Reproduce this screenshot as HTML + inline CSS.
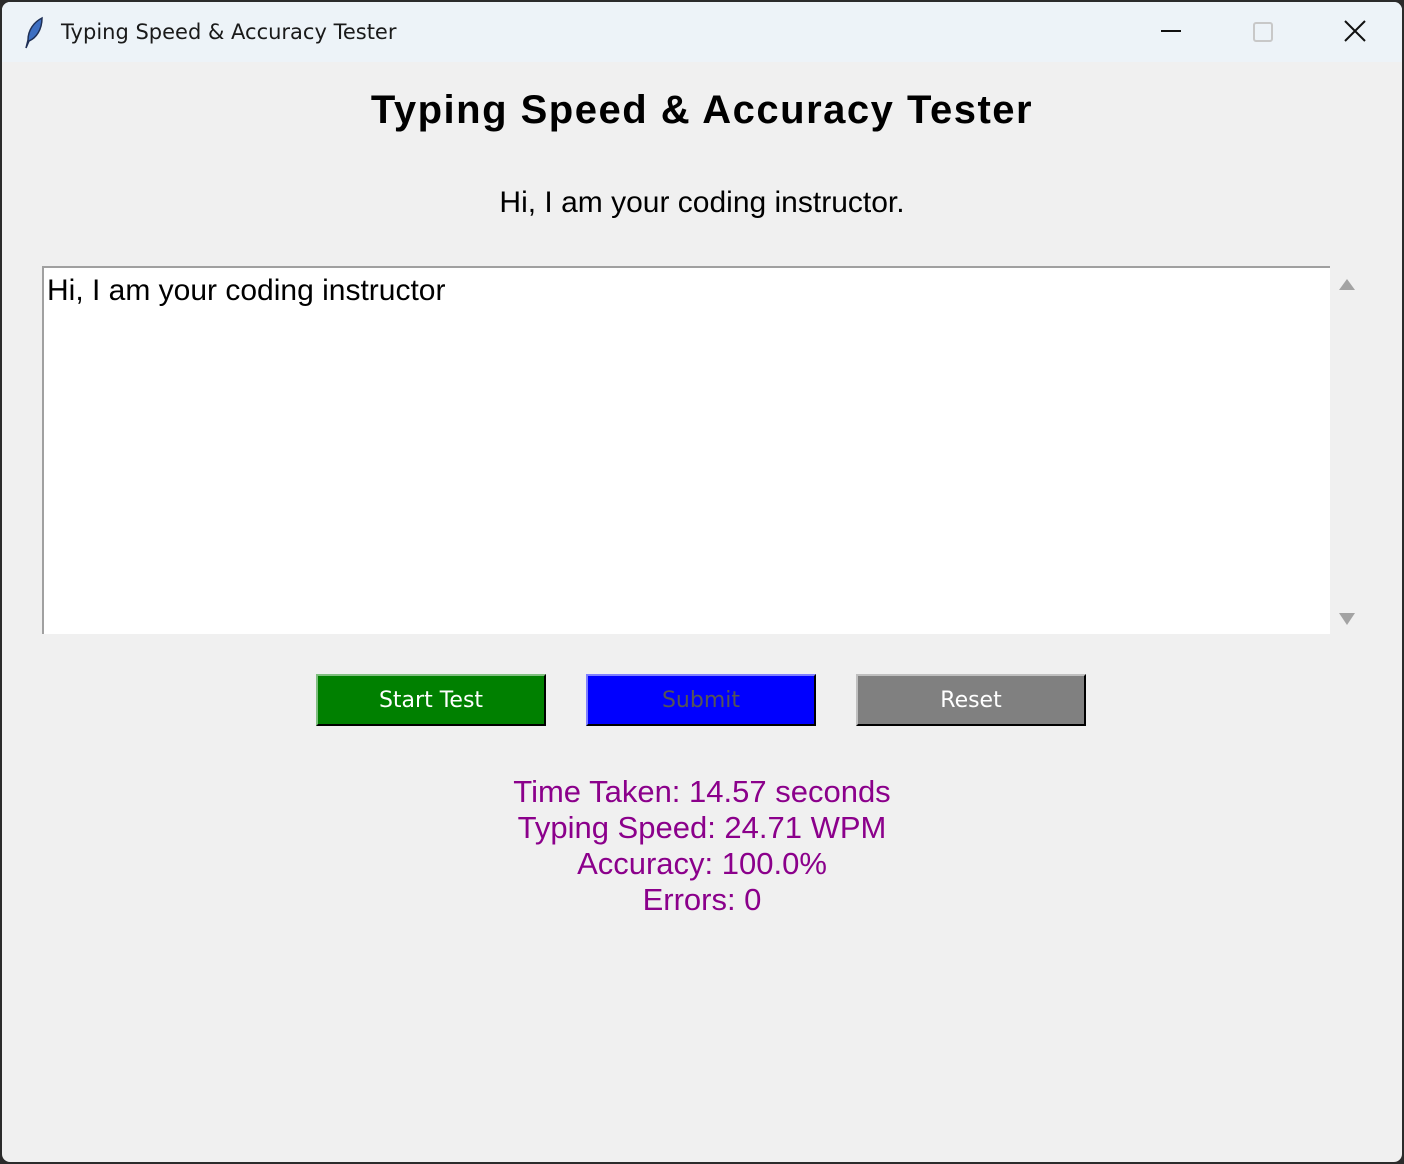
<!DOCTYPE html>
<html><head><meta charset="utf-8"><style>
*{margin:0;padding:0;box-sizing:border-box}
body{width:1404px;height:1164px;background:#2b2b2b;position:relative;overflow:hidden;font-family:"Liberation Sans",Arial,sans-serif}
.win{position:absolute;left:2px;top:2px;width:1400px;height:1160px;background:#f0f0f0;border-radius:8px;overflow:hidden}
.tb{position:absolute;left:0;top:0;width:1400px;height:60px;background:#edf3f8}
.tt{position:absolute;left:59px;top:18px;color:#1a1a1a;font-family:"DejaVu Sans","Liberation Sans",sans-serif;font-size:21px}
.abs{position:absolute}
h1{position:absolute;left:0;width:1400px;top:86px;text-align:center;font-size:40px;letter-spacing:1.5px;font-weight:bold;color:#000}
.sub{position:absolute;left:0;width:1400px;top:184px;text-align:center;font-size:30px;color:#000}
.ta{position:absolute;left:40px;top:264px;width:1288px;height:368px;background:#fff;border-top:2px solid #a0a0a0;border-left:2px solid #a0a0a0}
.ta span{position:absolute;left:3px;top:6px;font-size:30px;color:#000}
.btn{position:absolute;top:672px;width:230px;height:52px;font-size:22px;text-align:center;line-height:50px;border:2px solid;font-family:"DejaVu Sans",sans-serif}
.res{position:absolute;left:0;width:1400px;top:772px;text-align:center;font-size:31px;line-height:36px;color:#8b008b}
</style></head><body>
<div class="win">
<div class="tb">
<svg class="abs" style="left:22px;top:14px" width="22" height="34" viewBox="0 0 22 34"><path d="M18 2 C10 6 4 14 4 24 L2 32 L5 25 C12 22 18 14 18 2Z" fill="#3d6fc2" stroke="#1e2f55" stroke-width="1.5"/></svg>
<div class="tt">Typing Speed &amp; Accuracy Tester</div>
<div class="abs" style="left:1159px;top:28px;width:20px;height:2px;background:#111"></div>
<div class="abs" style="left:1251px;top:20px;width:20px;height:20px;border:2px solid #c8c8c8;border-radius:3px"></div>
<svg class="abs" style="left:1342px;top:18px" width="22" height="22"><path d="M1 1L21 21M21 1L1 21" stroke="#111" stroke-width="2"/></svg>
</div>
<h1>Typing Speed &amp; Accuracy Tester</h1>
<div class="sub">Hi, I am your coding instructor.</div>
<div class="ta"><span>Hi, I am your coding instructor</span></div>
<svg class="abs" style="left:1336px;top:276px" width="18" height="14"><path d="M9 1L17 12H1Z" fill="#a3a3a3"/></svg>
<svg class="abs" style="left:1336px;top:610px" width="18" height="14"><path d="M1 1H17L9 13Z" fill="#a3a3a3"/></svg>
<div class="btn" style="left:314px;background:#008000;color:#fff;border-color:#7fbf7f #000 #000 #7fbf7f">Start Test</div>
<div class="btn" style="left:584px;background:#0000ff;color:#555;border-color:#7f7fff #000 #000 #7f7fff">Submit</div>
<div class="btn" style="left:854px;background:#808080;color:#fff;border-color:#bfbfbf #000 #000 #bfbfbf">Reset</div>
<div class="res">Time Taken: 14.57 seconds<br>Typing Speed: 24.71 WPM<br>Accuracy: 100.0%<br>Errors: 0</div>
</div>
</body></html>
